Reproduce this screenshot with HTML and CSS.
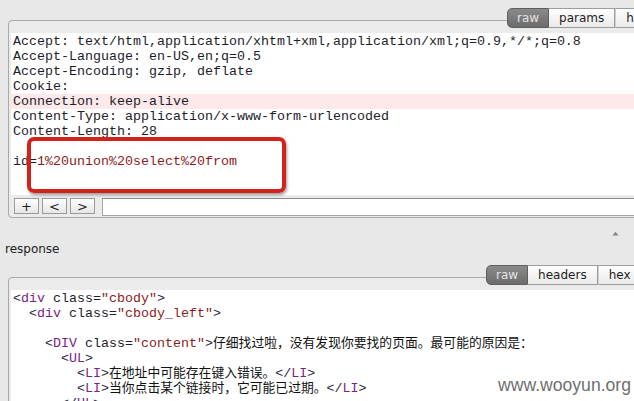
FILE: index.html
```html
<!DOCTYPE html>
<html lang="zh-CN">
<head>
<meta charset="utf-8"/>
<meta content="width=device-width, initial-scale=1.0" name="viewport"/>
<title>request / response</title>
<link rel="stylesheet" href="styles.css">
</head>
<body>
<div class="page">
<section class="pane-section">
<div class="pane-label">request</div>
<div class="tabs tabs-request">
<span class="tab active">raw</span>
<span class="tab">params</span>
<span class="tab">headers</span>
<span class="tab">hex</span>
</div>
<div class="pane">
<div class="editor">
<div class="line">Accept: text/html,application/xhtml+xml,application/xml;q=0.9,*/*;q=0.8</div>
<div class="line">Accept-Language: en-US,en;q=0.5</div>
<div class="line">Accept-Encoding: gzip, deflate</div>
<div class="line">Cookie: </div>
<div class="line hl">Connection: keep-alive</div>
<div class="line">Content-Type: application/x-www-form-urlencoded</div>
<div class="line">Content-Length: 28</div>
<div class="line"> </div>
<div class="line">id=<span class="v">1%20union%20select%20from</span></div>
<div class="mark"></div>
</div>
<div class="controls">
<button class="ctl">+</button>
<button class="ctl">&lt;</button>
<button class="ctl">&gt;</button>
<input class="search" type="text">
</div>
</div>
</section>
<div class="splitter">
<svg class="grip" width="7" height="5" viewBox="0 0 7 5"><path d="M0.5 4.5 L3.5 0.8 L6.5 4.5 Z" fill="#6a6a6a" opacity="0.8"/></svg>
</div>
<section class="pane-section">
<div class="pane-label">response</div>
<div class="tabs tabs-response">
<span class="tab active">raw</span>
<span class="tab">headers</span>
<span class="tab">hex</span>
<span class="tab">html</span>
<span class="tab">render</span>
</div>
<div class="pane">
<div class="editor editor-response">
<div class="line"><span class="p">&lt;</span><span class="t">div</span> <span class="a">class=</span><span class="v">"cbody"</span><span class="p">&gt;</span></div>
<div class="line">  <span class="p">&lt;</span><span class="t">div</span> <span class="a">class=</span><span class="v">"cbody_left"</span><span class="p">&gt;</span></div>
<div class="line"> </div>
<div class="line">    <span class="p">&lt;</span><span class="t">DIV</span> <span class="a">class=</span><span class="v">"content"</span><span class="p">&gt;</span><span class="cjk">仔细找过啦，没有发现你要找的页面。最可能的原因是：</span></div>
<div class="line">      <span class="p">&lt;</span><span class="t">UL</span><span class="p">&gt;</span></div>
<div class="line">        <span class="p">&lt;</span><span class="t">LI</span><span class="p">&gt;</span><span class="cjk">在地址中可能存在键入错误。</span><span class="p">&lt;/</span><span class="t">LI</span><span class="p">&gt;</span></div>
<div class="line">        <span class="p">&lt;</span><span class="t">LI</span><span class="p">&gt;</span><span class="cjk">当你点击某个链接时，它可能已过期。</span><span class="p">&lt;/</span><span class="t">LI</span><span class="p">&gt;</span></div>
<div class="line">      <span class="p">&lt;/</span><span class="t">UL</span><span class="p">&gt;</span></div>
</div>
</div>
</section>
</div>
<div class="watermark">www.wooyun.org</div>
</body>
</html>
```

FILE: styles.css
```css
html, body {
    margin: 0;
    padding: 0;
    overflow: hidden;
    background-color: #e8e8e8;
}
body {
    font-family: 'DejaVu Sans', 'Liberation Sans', sans-serif;
    font-size: 12px;
    color: #222;
}
.page {
    width: 680px;
    margin-top: -17px;
    padding-left: 8px;
}
.pane-label {
    height: 18px;
    line-height: 18px;
    margin: 0 0 7px -3px;
}
.tabs {
    display: flex;
    height: 20px;
    position: relative;
    z-index: 1;
    white-space: nowrap;
}
.tabs-request {
    margin-left: 499px;
}
.tabs-response {
    margin-left: 478px;
}
.tab {
    height: 18px;
    line-height: 18px;
    padding: 0 10px;
    border: 1px solid #9c9c9c;
    border-left: 1px solid #cfcfcf;
    background: linear-gradient(#fefefe, #eaeaea);
    color: #1e1e1e;
    flex-shrink: 0;
}
.tab.active {
    padding: 0 9px;
    border: 1px solid #5e5e5e;
    border-radius: 5px 0 0 5px;
    background: linear-gradient(#8a8a8a, #6c6c6c);
    color: #e4e4e4;
}
.tab.active + .tab {
    border-left: none;
}
.pane {
    margin-top: -8px;
    border: 1px solid #a9a9a9;
    border-radius: 4px;
    background-color: #ebebeb;
    padding: 12px 0 1px 2px;
}
.editor {
    position: relative;
    background-color: #fff;
    height: 161px;
    padding-top: 1px;
    font-family: 'Liberation Mono', 'Noto Sans CJK SC', monospace;
    font-size: 13.33px;
    line-height: 15px;
    color: #1d1d2b;
}
.editor-response {
    height: 140px;
}
.line {
    height: 15px;
    padding-left: 2px;
    white-space: pre;
}
.line.hl {
    background-color: #fde9e9;
}
.v {
    color: #8b1c1c;
}
.t {
    color: #7d2183;
}
.p {
    color: #2a2a40;
}
.a {
    color: #1d1d2b;
}
.cjk {
    font-size: 12.8px;
    color: #111;
}
.mark {
    position: absolute;
    left: 16px;
    top: 104px;
    width: 251px;
    height: 48px;
    border: 4px solid #d3211d;
    border-radius: 7px;
    box-shadow: 1px 2px 3px rgba(0, 0, 0, 0.4);
}
.controls {
    display: flex;
    align-items: flex-start;
    gap: 3px;
    height: 18px;
    margin-top: 3px;
    padding-left: 3px;
}
.ctl {
    box-sizing: border-box;
    width: 25px;
    height: 16px;
    padding: 0;
    border: 1px solid #9a9a9a;
    background: linear-gradient(#ffffff, #e6e6e6);
    font-family: 'DejaVu Sans', sans-serif;
    font-size: 13px;
    line-height: 13px;
    color: #222;
}
.search {
    flex: 1;
    box-sizing: border-box;
    height: 18px;
    margin: 0 0 0 4px;
    border: 1px solid #a4a4a4;
    border-top-color: #8a8a8a;
    background-color: #fff;
}
.splitter {
    box-sizing: border-box;
    height: 22px;
    padding: 13px 0 0 604px;
}
.grip {
    display: block;
}
.watermark {
    position: absolute;
    left: 498px;
    top: 377px;
    font-family: 'Liberation Sans', Arial, sans-serif;
    font-size: 17.6px;
    line-height: 1;
    color: #6f6f6f;
}
```
